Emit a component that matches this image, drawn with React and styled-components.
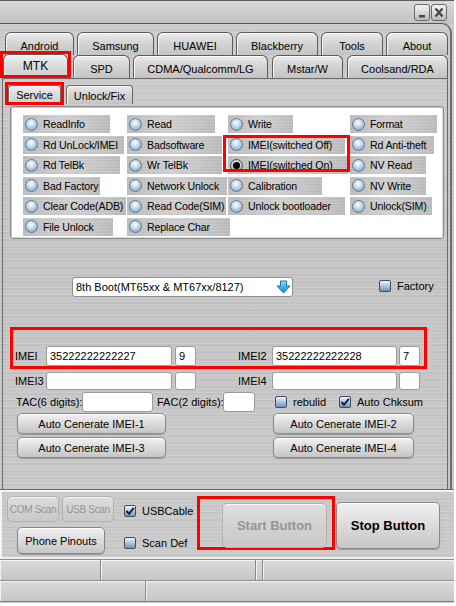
import React from 'react';
import styled, { createGlobalStyle, css } from 'styled-components';

const Global = createGlobalStyle`
  html, body { margin: 0; padding: 0; background: #fff; }
  body { font-family: "Liberation Sans", Arial, sans-serif; font-size: 11px; color: #000; }
  * { box-sizing: border-box; }
`;

const metal = css`
  background:
    repeating-linear-gradient(180deg,
      rgba(255,255,255,0.10) 0px, rgba(255,255,255,0.10) 1px,
      rgba(0,0,0,0.025) 1px, rgba(0,0,0,0.025) 3px,
      rgba(255,255,255,0.05) 3px, rgba(255,255,255,0.05) 4px,
      transparent 4px, transparent 7px),
    linear-gradient(180deg, #cdcdcd 0%, #c5c5c5 45%, #cbcbcb 100%);
`;

const Window = styled.div`
  width: 454px;
  height: 603px;
  display: flex;
  flex-direction: column;
  overflow: hidden;
  ${metal}
`;

const TitleBar = styled.div`
  height: 23px;
  flex: none;
  border-top: 1px solid #5a5a5a;
  display: flex;
  justify-content: flex-end;
  align-items: flex-start;
  padding: 3px 7px 0 0;
  gap: 1px;
  background: linear-gradient(180deg, #d9d9d9 0%, #cbcbcb 60%, #c2c2c2 100%);
`;

const WinBtn = styled.div`
  width: 16px;
  height: 17px;
  border: 1px solid #6a6a6a;
  border-radius: 3px;
  background: linear-gradient(180deg, #f4f4f4 0%, #d8d8d8 50%, #b9b9b9 100%);
  display: flex;
  align-items: center;
  justify-content: center;
`;

const TopFrame = styled.div`
  flex: none;
  height: 467px;
  margin-right: 2px;
  border-top: 1px solid #555;
  border-right: 2px solid #6e6e6e;
  border-top-right-radius: 10px;
  display: flex;
  flex-direction: column;
  padding-top: 8px;
`;

const TabRow = styled.div`
  display: flex;
  align-items: flex-end;
  height: 23px;
  flex: none;
  padding-left: ${p => p.$pl}px;
`;

const Tab = styled.div`
  flex: none;
  width: ${p => p.$w}px;
  height: ${p => p.$h || 23}px;
  margin-left: ${p => p.$ml || 0}px;
  border: 1px solid #5c5c5c;
  border-bottom: none;
  border-radius: 6px 6px 0 0;
  background: ${p => p.$active
    ? 'linear-gradient(180deg, #f2f2f2 0%, #dedede 45%, #d0d0d0 100%)'
    : 'linear-gradient(180deg, #ececec 0%, #d6d6d6 40%, #c3c3c3 100%)'};
  box-shadow: inset 1px 1px 0 rgba(255,255,255,0.8);
  display: flex;
  align-items: center;
  justify-content: center;
  padding-top: ${p => p.$pt ?? 3}px;
  font-size: ${p => p.$fs || 11}px;
  white-space: nowrap;
`;

const Mark = styled.div`
  flex: none;
  border: 3px solid #ff0000;
  margin: ${p => p.$m};
  display: flex;
`;

const Panel = styled.div`
  flex: 1;
  margin: 0 2px 0 2px;
  border: 1px solid #6a6a6a;
  border-bottom: none;
  display: flex;
  flex-direction: column;
`;

const SubTabRow = styled.div`
  display: flex;
  align-items: flex-start;
  padding: 3px 0 0 2px;
  flex: none;
`;

const SubTab = styled(Tab)`
  border-radius: 4px 4px 0 0;
  padding-top: 2px;
  border-color: #6a6a6a;
  margin-top: ${p => p.$mt || 0}px;
`;

const WhitePanel = styled.div`
  position: relative;
  flex: none;
  width: 434px;
  height: 133px;
  margin: 1px 0 0 7px;
  background: #fff;
  border: 1px solid #8a8a8a;
  border-radius: 3px;
  box-shadow: inset 1px 1px 0 #c8c8c8, inset -1px -1px 0 #e0e0e0;
  padding: 8px 0 0 12px;
  display: flex;
`;

const Column = styled.div`
  flex: none;
  width: ${p => p.$w}px;
  display: flex;
  flex-direction: column;
  gap: 2.6px;
`;

const OptItem = styled.div`
  width: ${p => p.$w}px;
  height: 18px;
  display: flex;
  align-items: center;
  gap: 5px;
  padding-left: 2px;
  white-space: nowrap;
  font-size: 10.6px;
  letter-spacing: -0.15px;
  background:
    repeating-linear-gradient(180deg, rgba(255,255,255,0.12) 0 1px, transparent 1px 3px),
    linear-gradient(90deg, #bbbbbb 0%, #cecece 45%, #c3c3c3 80%, #bababa 100%);
`;

const Radio = styled.span`
  flex: none;
  position: relative;
  width: 13px;
  height: 13px;
  border-radius: 50%;
  border: 1px solid #66778a;
  background: radial-gradient(circle at 45% 35%, #ffffff 0%, #d2e4f3 30%, #8fb2cf 75%, #6a8fb0 100%);
  ${p => p.$on && css`
    border-color: #505050;
    background: radial-gradient(circle at 45% 35%, #f0f0f0 0%, #b8b8b8 70%, #8a8a8a 100%);
    &::after {
      content: '';
      position: absolute;
      left: 2px; top: 2px;
      width: 7px; height: 7px;
      border-radius: 50%;
      background: #000;
    }
  `}
`;

const Overlay = styled.div`
  position: absolute;
  left: 212px;
  top: 28px;
  width: 127px;
  height: 37px;
  border: 3px solid #ff0000;
  pointer-events: none;
`;

const ComboRow = styled.div`
  display: flex;
  align-items: flex-start;
  margin-top: 38px;
  padding-left: 69px;
  height: 20px;
  flex: none;
`;

const Combo = styled.div`
  width: 221px;
  height: 20px;
  background: #fff;
  border: 1px solid #8e8e8e;
  border-radius: 3px;
  display: flex;
  align-items: center;
  justify-content: space-between;
  padding: 0 1px 0 3px;
  white-space: nowrap;
`;

const CheckLabel = styled.div`
  display: flex;
  align-items: center;
  gap: 6px;
  flex: none;
  width: ${p => (p.$w ? `${p.$w}px` : 'auto')};
  margin: ${p => p.$m || 0};
  height: 16px;
  white-space: nowrap;
`;

const Box = styled.span`
  flex: none;
  width: 12px;
  height: 12px;
  border: 1px solid #3d4e60;
  border-radius: 2px;
  background: linear-gradient(180deg, #eef4fa 0%, #b4cbe0 45%, #6f94b8 100%);
  display: flex;
  align-items: center;
  justify-content: center;
`;

const RedBox = styled.div`
  flex: none;
  width: 417px;
  height: 42px;
  margin: 30px 0 0 7px;
  border: 3px solid #ff0000;
  padding: 16px 0 0 2px;
`;

const ImeiRow = styled.div`
  display: flex;
  align-items: center;
  height: ${p => p.$h || 20}px;
  flex: none;
  margin-top: ${p => p.$mt || 0}px;
  padding-left: ${p => p.$pl || 0}px;
`;

const Label = styled.span`
  flex: none;
  width: ${p => p.$w}px;
  margin-left: ${p => p.$ml || 0}px;
  white-space: nowrap;
`;

const Field = styled.input`
  flex: none;
  width: ${p => p.$w}px;
  height: 100%;
  margin-left: ${p => p.$ml || 0}px;
  border: 1px solid #9a9a9a;
  border-radius: 3px;
  background: #fff;
  font-family: inherit;
  font-size: 11px;
  color: #000;
  padding: 0 3px;
  outline: none;
`;

const BtnRow = styled.div`
  display: flex;
  flex: none;
  margin-top: ${p => p.$mt}px;
  padding-left: 14px;
`;

const Btn = styled.button`
  flex: none;
  width: ${p => p.$w}px;
  height: ${p => p.$h}px;
  margin: ${p => p.$m || 0};
  padding: 0;
  font-family: inherit;
  font-size: ${p => p.$fs || 11}px;
  letter-spacing: ${p => p.$ls || 0}px;
  font-weight: ${p => (p.$bold ? 700 : 400)};
  color: #000;
  border: 1px solid #8a8a8a;
  border-radius: 5px;
  background: linear-gradient(180deg, #f1f1f1 0%, #dddddd 45%, #c6c6c6 100%);
  box-shadow: inset 0 1px 0 #fff, 0 1px 1px rgba(0,0,0,0.25);
  white-space: nowrap;
  ${p => p.$off && css`
    color: #959595;
    border-color: #b2b2b2;
    background: linear-gradient(180deg, #dedede 0%, #d2d2d2 50%, #c9c9c9 100%);
    box-shadow: inset 0 1px 0 rgba(255,255,255,0.7);
  `}
`;

const BottomBar = styled.div`
  flex: none;
  height: 69px;
  border-top: 2px solid #f3f3f3;
  border-left: 2px solid #f3f3f3;
  border-bottom: 2px solid #eeeeee;
  box-shadow: 0 -1px 0 #6a6a6a;
  display: flex;
  align-items: flex-start;
  padding: 4px 0 0 5px;
`;

const LeftCol = styled.div`
  flex: none;
  width: 107px;
  display: flex;
  flex-direction: column;
`;

const ScanRow = styled.div`
  display: flex;
  gap: 3px;
`;

const CheckCol = styled.div`
  flex: none;
  width: 73px;
  margin-left: 10px;
  padding-top: 7px;
  display: flex;
  flex-direction: column;
  gap: 16px;
`;

const StartMark = styled.div`
  flex: none;
  width: 138px;
  height: 54px;
  border: 3px solid #ff0000;
  padding: 4px 0 0 22px;
`;

const StatusRow = styled.div`
  flex: none;
  height: ${p => p.$h}px;
  display: flex;
  border-top: 1px solid #8e8e8e;
  ${p => p.$last && css`border-bottom: 1px solid #7a7a7a;`}
`;

const Cell = styled.div`
  flex: ${p => (p.$w ? 'none' : 1)};
  width: ${p => (p.$w ? `${p.$w}px` : 'auto')};
  border-right: 1px solid #8a8a8a;
  box-shadow: inset 1px 1px 0 rgba(255,255,255,0.7);
  background: linear-gradient(180deg, #dadada 0%, #cfcfcf 60%, #c6c6c6 100%);
  &:last-child { border-right: none; }
`;

const CheckMark = () => (
  <svg width="10" height="10" viewBox="0 0 10 10">
    <path d="M1.5 5 L4 7.8 L8.8 1.8" fill="none" stroke="#10243a" strokeWidth="2" />
  </svg>
);

const DownArrow = () => (
  <svg width="15" height="14" viewBox="0 0 15 14">
    <defs>
      <linearGradient id="ag" x1="0" y1="0" x2="0" y2="1">
        <stop offset="0" stopColor="#8fe2ff" />
        <stop offset="0.5" stopColor="#3ab4ef" />
        <stop offset="1" stopColor="#1584cf" />
      </linearGradient>
    </defs>
    <polygon points="4.5,1 10.5,1 10.5,6 14,6 7.5,13 1,6 4.5,6" fill="url(#ag)" stroke="#1a6fa8" strokeWidth="1" strokeLinejoin="round" />
  </svg>
);

const columns = [
  { w: 104, items: [['ReadInfo', 87], ['Rd UnLock/IMEI', 101], ['Rd TelBk', 97], ['Bad Factory', 77], ['Clear Code(ADB)', 103], ['File Unlock', 90]] },
  { w: 101, items: [['Read', 88], ['Badsoftware', 95], ['Wr TelBk', 95], ['Network Unlock', 100], ['Read Code(SIM)', 99], ['Replace Char', 103]] },
  { w: 122, items: [['Write', 65], ['IMEI(switched Off)', 117], ['IMEI(switched On)', 120, true], ['Calibration', 94], ['Unlock bootloader', 117]] },
  { w: 95, items: [['Format', 87], ['Rd Anti-theft', 84], ['NV Read', 76], ['NV Write', 76], ['Unlock(SIM)', 82]] },
];

const row1 = [['Android', 69, 0], ['Samsung', 77, 3], ['HUAWEI', 76, 3], ['Blackberry', 82, 3], ['Tools', 62, 3], ['About', 62, 3]];

export default function App() {
  return (
    <>
      <Global />
      <Window>
        <TitleBar>
          <WinBtn>
            <svg width="12" height="13" viewBox="0 0 12 13"><rect x="3" y="9" width="6" height="2.5" fill="#454545" /></svg>
          </WinBtn>
          <WinBtn>
            <svg width="12" height="13" viewBox="0 0 12 13"><path d="M2.5 2.5 L9.5 10.5 M9.5 2.5 L2.5 10.5" stroke="#454545" strokeWidth="2.2" /></svg>
          </WinBtn>
        </TitleBar>
        <TopFrame>
          <TabRow $pl={5}>
            {row1.map(([t, w, ml]) => (
              <Tab key={t} $w={w} $ml={ml}>{t}</Tab>
            ))}
          </TabRow>
          <TabRow $pl={3}>
            <Mark $m="0 -3px 0 -3px">
              <Tab $w={65} $h={21} $active $pt={2} $fs={12}>MTK</Tab>
            </Mark>
            <Tab $w={57} $ml={5}>SPD</Tab>
            <Tab $w={135} $ml={3}>CDMA/Qualcomm/LG</Tab>
            <Tab $w={71} $ml={4}>Mstar/W</Tab>
            <Tab $w={101} $ml={4}>Coolsand/RDA</Tab>
          </TabRow>
          <Panel>
            <SubTabRow>
              <Mark $m="0 -3px 0 0">
                <SubTab $w={53} $h={17} $active $pt={1}>Service</SubTab>
              </Mark>
              <SubTab $w={67} $h={19} $ml={5} $mt={3}>Unlock/Fix</SubTab>
            </SubTabRow>
            <WhitePanel>
              {columns.map((c, ci) => (
                <Column key={ci} $w={c.w}>
                  {c.items.map(([t, w, on]) => (
                    <OptItem key={t} $w={w}>
                      <Radio $on={on} />
                      <span>{t}</span>
                    </OptItem>
                  ))}
                </Column>
              ))}
              <Overlay />
            </WhitePanel>

            <ComboRow>
              <Combo>
                <span>8th Boot(MT65xx &amp; MT67xx/8127)</span>
                <DownArrow />
              </Combo>
              <CheckLabel $m="1px 0 0 86px">
                <Box />
                <span>Factory</span>
              </CheckLabel>
            </ComboRow>

            <RedBox>
              <ImeiRow>
                <Label $w={31}>IMEI</Label>
                <Field $w={126} defaultValue="35222222222227" readOnly />
                <Field $w={21} $ml={3} defaultValue="9" readOnly />
                <Label $w={34} $ml={42}>IMEI2</Label>
                <Field $w={125} defaultValue="35222222222228" readOnly />
                <Field $w={21} $ml={2} defaultValue="7" readOnly />
              </ImeiRow>
            </RedBox>

            <ImeiRow $h={18} $mt={3} $pl={12}>
              <Label $w={31}>IMEI3</Label>
              <Field $w={126} defaultValue="" readOnly />
              <Field $w={21} $ml={3} defaultValue="" readOnly />
              <Label $w={34} $ml={42}>IMEI4</Label>
              <Field $w={125} defaultValue="" readOnly />
              <Field $w={21} $ml={2} defaultValue="" readOnly />
            </ImeiRow>

            <ImeiRow $h={20} $mt={2} $pl={13}>
              <Label $w={66}>TAC(6 digits):</Label>
              <Field $w={71} defaultValue="" readOnly />
              <Label $w={66} $ml={4}>FAC(2 digits):</Label>
              <Field $w={32} defaultValue="" readOnly />
              <CheckLabel $w={64} $m="0 0 0 20px">
                <Box />
                <span>rebulid</span>
              </CheckLabel>
              <CheckLabel>
                <Box><CheckMark /></Box>
                <span>Auto Chksum</span>
              </CheckLabel>
            </ImeiRow>

            <BtnRow $mt={1}>
              <Btn $w={149} $h={21}>Auto Cenerate IMEI-1</Btn>
              <Btn $w={141} $h={21} $m="0 0 0 107px">Auto Cenerate IMEI-2</Btn>
            </BtnRow>
            <BtnRow $mt={3}>
              <Btn $w={149} $h={21}>Auto Cenerate IMEI-3</Btn>
              <Btn $w={141} $h={21} $m="0 0 0 107px">Auto Cenerate IMEI-4</Btn>
            </BtnRow>
          </Panel>
        </TopFrame>

        <BottomBar>
          <LeftCol>
            <ScanRow>
              <Btn $w={52} $h={26} $off $fs={10} $ls={-0.3}>COM Scan</Btn>
              <Btn $w={52} $h={26} $off $fs={10} $ls={-0.3}>USB Scan</Btn>
            </ScanRow>
            <Btn $w={88} $h={27} $m="5px 0 0 10px">Phone Pinouts</Btn>
          </LeftCol>
          <CheckCol>
            <CheckLabel>
              <Box><CheckMark /></Box>
              <span>USBCable</span>
            </CheckLabel>
            <CheckLabel>
              <Box />
              <span>Scan Def</span>
            </CheckLabel>
          </CheckCol>
          <StartMark>
            <Btn $w={105} $h={45} $off $bold $fs={13}>Start Button</Btn>
          </StartMark>
          <Btn $w={104} $h={47} $bold $fs={13} $m="6px 0 0 1px">Stop Button</Btn>
        </BottomBar>

        <StatusRow $h={21}>
          <Cell $w={101} />
          <Cell $w={155} />
          <Cell $w={7} />
          <Cell />
        </StatusRow>
        <StatusRow $h={22} $last>
          <Cell $w={146} />
          <Cell />
        </StatusRow>
      </Window>
    </>
  );
}
